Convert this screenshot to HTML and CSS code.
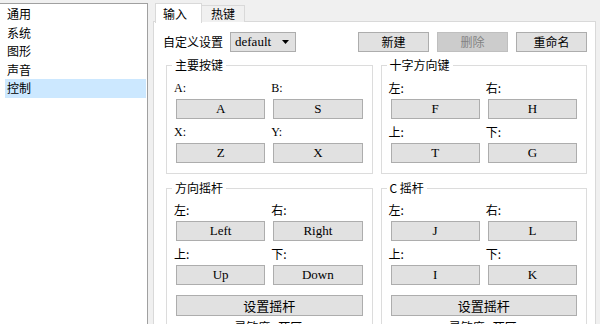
FILE: index.html
```html
<!DOCTYPE html>
<html lang="zh-CN">
<head>
    <meta charset="UTF-8">
    <title>设置</title>
    <link rel="stylesheet" href="styles.css">
</head>
<body>
    <div class="window">
        <ul class="nav">
            <li>通用</li>
            <li>系统</li>
            <li>图形</li>
            <li>声音</li>
            <li class="selected">控制</li>
        </ul>

        <div class="tabs">
            <div class="tab-strip">
                <span class="tab active">输入</span>
                <span class="tab">热键</span>
            </div>

            <div class="tab-panel">
                <div class="toolbar">
                    <span class="toolbar-label">自定义设置</span>
                    <div class="combo">
                        <span class="latin">default</span>
                        <svg class="combo-arrow" width="8" height="4" viewBox="0 0 8 4"><path d="M0 0H7L3.5 4Z" fill="#000"/></svg>
                    </div>
                    <div class="spacer"></div>
                    <button class="btn">新建</button>
                    <button class="btn" disabled>删除</button>
                    <button class="btn">重命名</button>
                </div>

                <div class="group-row">
                    <fieldset class="group">
                        <legend>主要按键</legend>
                        <div class="keys">
                            <span class="key-label latin">A:</span>
                            <span class="key-label latin">B:</span>
                            <button class="btn key latin">A</button>
                            <button class="btn key latin">S</button>
                            <span class="key-label latin">X:</span>
                            <span class="key-label latin">Y:</span>
                            <button class="btn key latin">Z</button>
                            <button class="btn key latin">X</button>
                        </div>
                    </fieldset>

                    <fieldset class="group">
                        <legend>十字方向键</legend>
                        <div class="keys">
                            <span class="key-label">左:</span>
                            <span class="key-label">右:</span>
                            <button class="btn key latin">F</button>
                            <button class="btn key latin">H</button>
                            <span class="key-label">上:</span>
                            <span class="key-label">下:</span>
                            <button class="btn key latin">T</button>
                            <button class="btn key latin">G</button>
                        </div>
                    </fieldset>
                </div>

                <div class="group-row">
                    <fieldset class="group group-stick">
                        <legend>方向摇杆</legend>
                        <div class="keys">
                            <span class="key-label">左:</span>
                            <span class="key-label">右:</span>
                            <button class="btn key latin">Left</button>
                            <button class="btn key latin">Right</button>
                            <span class="key-label">上:</span>
                            <span class="key-label">下:</span>
                            <button class="btn key latin">Up</button>
                            <button class="btn key latin">Down</button>
                            <button class="btn key wide">设置摇杆</button>
                            <span class="key-label wide center">灵敏度 &nbsp; 死区</span>
                        </div>
                    </fieldset>

                    <fieldset class="group group-stick">
                        <legend>C 摇杆</legend>
                        <div class="keys">
                            <span class="key-label">左:</span>
                            <span class="key-label">右:</span>
                            <button class="btn key latin">J</button>
                            <button class="btn key latin">L</button>
                            <span class="key-label">上:</span>
                            <span class="key-label">下:</span>
                            <button class="btn key latin">I</button>
                            <button class="btn key latin">K</button>
                            <button class="btn key wide">设置摇杆</button>
                            <span class="key-label wide center">灵敏度 &nbsp; 死区</span>
                        </div>
                    </fieldset>
                </div>
            </div>
        </div>
    </div>
</body>
</html>
```

FILE: styles.css
```css
:root {
    --bg: #f0f0f0;
    --panel: #ffffff;
    --line: #d9d9d9;
    --list-border: #a0a0a0;
    --btn-bg: #e1e1e1;
    --btn-border: #adadad;
    --selected: #cce8ff;
    --text: #000000;
    --text-disabled: #838383;
}

* {
    box-sizing: border-box;
    margin: 0;
    padding: 0;
}

body {
    font-family: "Noto Sans CJK SC", "Noto Sans", sans-serif;
    font-size: 12px;
    color: var(--text);
    background: var(--bg);
    height: 100vh;
    overflow: hidden;
}

.window {
    display: flex;
    height: 100%;
}

/* Left list */
.nav {
    list-style: none;
    width: 148px;
    margin-top: 3px;
    height: 340px;
    padding: 1px 1px 0 5px;
    background: var(--panel);
    border-top: 1px solid var(--list-border);
    border-right: 1px solid var(--list-border);
}
.nav li {
    height: 18.5px;
    line-height: 18.5px;
    padding-left: 2px;
}
.nav li.selected {
    background: var(--selected);
}

/* Tabs */
.tabs {
    flex: 1;
    display: flex;
    flex-direction: column;
    margin-left: 5px;
    margin-right: 4px;
}
.tab-strip {
    display: flex;
    align-items: flex-end;
    height: 23px;
    padding-left: 2px;
    padding-top: 3px;
    position: relative;
    z-index: 1;
}
.tab {
    height: 17px;
    line-height: 16px;
    padding: 0 9px;
    border: 1px solid var(--line);
    border-left: none;
    border-bottom: none;
    background: var(--bg);
}
.tab.active {
    height: 20px;
    line-height: 19px;
    padding: 0 8px 0 7px;
    border-left: 1px solid var(--line);
    background: var(--panel);
    margin-bottom: -1px;
    width: 47px;
}

.tab-panel {
    height: 340px;
    margin-top: -1px;
    background: var(--panel);
    border: 1px solid var(--line);
    padding: 10px 8px 0 9px;
}

/* Toolbar */
.toolbar {
    display: flex;
    align-items: center;
    gap: 8px;
    height: 20px;
}
.toolbar-label {
    margin-right: -1px;
    line-height: 20px;
}
.combo {
    display: flex;
    align-items: center;
    width: 66px;
    height: 20px;
    padding: 0 5px 0 4px;
    background: var(--btn-bg);
    border: 1px solid var(--btn-border);
    line-height: 18px;
}
.combo-arrow {
    margin-left: auto;
}
.spacer {
    flex: 1;
}

.btn {
    font: inherit;
    color: inherit;
    width: 71px;
    height: 20px;
    line-height: 18px;
    background: var(--btn-bg);
    border: 1px solid var(--btn-border);
    text-align: center;
}
.btn:disabled {
    background: #cccccc;
    border-color: #bfbfbf;
    color: var(--text-disabled);
}

/* Latin key names use a serif face, like the bitmap font of the original */
.latin,
.btn.latin {
    font-family: "Liberation Serif", "Noto Sans CJK SC", serif;
    font-size: 13px;
}

/* Group boxes */
.group-row {
    display: flex;
    gap: 8px;
    margin-left: 3px;
    margin-top: 5px;
}
.group-row + .group-row {
    margin-top: 6px;
}
.group {
    flex: 1;
    border: 1px solid #dcdcdc;
    padding: 0 9px 4px 9px;
    min-width: 0;
}
.group legend {
    line-height: 16px;
    padding: 0 3px;
    margin-left: -4px;
}

.keys {
    display: grid;
    grid-template-columns: 1fr 1fr;
    column-gap: 8px;
    padding-top: 8px;
}
.group-stick .keys {
    padding-top: 7px;
}
.key-label {
    height: 14px;
    line-height: 14px;
    margin-bottom: 4px;
    margin-left: -2px;
}
.key-label.latin {
    font-size: 12px;
}
.key {
    width: auto;
    height: 20px;
    margin-bottom: 6px;
}
.wide {
    grid-column: 1 / 3;
}
.btn.wide {
    height: 21px;
    line-height: 19px;
    font-size: 13px;
    margin-top: 4px;
    margin-bottom: 4px;
}
.center {
    text-align: center;
}
```
